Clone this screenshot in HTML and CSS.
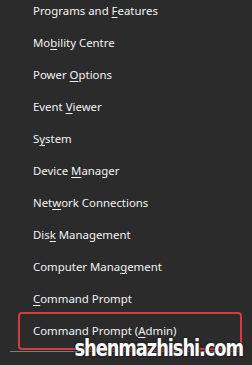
FILE: index.html
```html
<!DOCTYPE html>
<html>
<head>
<meta charset="utf-8">
<link rel="stylesheet" href="styles.css">
</head>
<body>
<div class="menu">
  <ul class="items">
    <li class="item"><span class="label">Programs and <u>F</u>eatures</span></li>
    <li class="item"><span class="label">Mo<u>b</u>ility Centre</span></li>
    <li class="item"><span class="label">Power <u>O</u>ptions</span></li>
    <li class="item"><span class="label">Event <u>V</u>iewer</span></li>
    <li class="item"><span class="label">S<u>y</u>stem</span></li>
    <li class="item"><span class="label">Device <u>M</u>anager</span></li>
    <li class="item"><span class="label">Net<u>w</u>ork Connections</span></li>
    <li class="item"><span class="label">Dis<u>k</u> Management</span></li>
    <li class="item"><span class="label">Computer Mana<u>g</u>ement</span></li>
    <li class="item"><span class="label"><u>C</u>ommand Prompt</span></li>
    <li class="item highlight"><span class="label">Command Prompt (<u>A</u>dmin)</span></li>
  </ul>
  <div class="separator"></div>
  <div class="watermark">shenmazhishi.com</div>
</div>
</body>
</html>
```
FILE: styles.css
```css
html, body {
  margin: 0;
  padding: 0;
  background: #2b2b2b;
  width: 252px;
  height: 365px;
  overflow: hidden;
}
.menu {
  position: relative;
  height: 365px;
}
.items {
  list-style: none;
  margin: -5px 0 0 0;
  padding: 0;
}
.item {
  height: 32px;
  display: flex;
  align-items: center;
  padding-left: 33px;
  font-family: "Noto Sans", "Open Sans", sans-serif;
  font-size: 11.4px;
  color: #f2f2f2;
  white-space: nowrap;
}
.label {
  white-space: pre;
  line-height: 14px;
}
.item u {
  text-decoration: underline;
  text-decoration-thickness: 1px;
  text-underline-offset: 2px;
}
.highlight {
  position: relative;
}
.highlight::after {
  content: "";
  position: absolute;
  left: 18px;
  right: 10px;
  top: -3px;
  bottom: -3px;
  border: 2.5px solid #d83a3f;
  border-radius: 4px;
}
.separator {
  margin: 4px 12px 0 10px;
  height: 1px;
  background: #7d7d7d;
}
.watermark {
  position: absolute;
  right: 9px;
  top: 341px;
  font-family: "DejaVu Sans Condensed", "DejaVu Sans", sans-serif;
  font-weight: bold;
  font-size: 23px;
  line-height: 24px;
  letter-spacing: -1.2px;
  transform: scaleX(0.86);
  transform-origin: right center;
  color: #ffffff;
  text-shadow: 0 0 2px #222, 1px 1px 1px #222, -1px -1px 1px #222;
}
```
